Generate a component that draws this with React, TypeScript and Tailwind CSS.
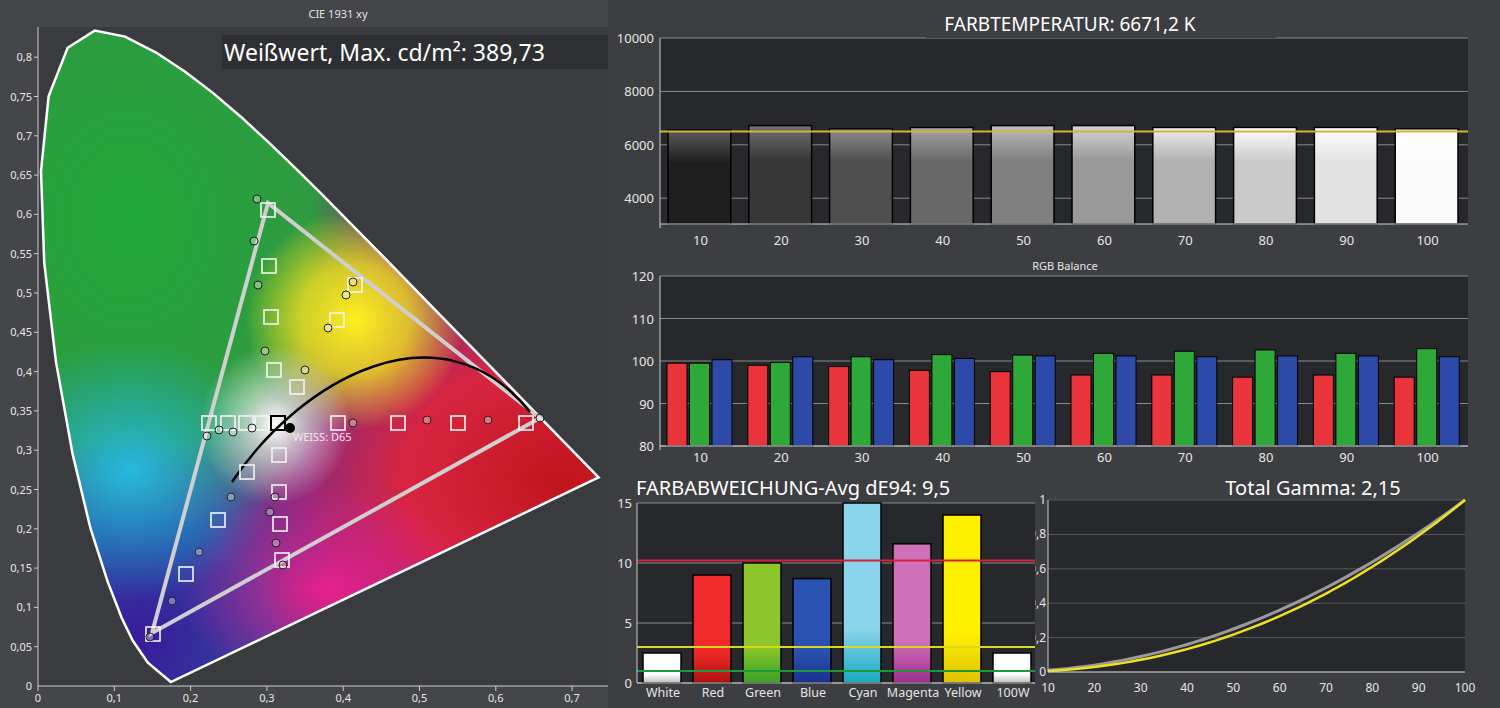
import React from "react";

const FONT = "font-['Open_Sans','Liberation_Sans',sans-serif]";

// CIE chromaticity to pixel in the left panel
const cx = (x: number) => 38 + 763 * x;
const cy = (y: number) => 686 - 786 * y;

const locus: [number, number][] = [
  [0.1741, 0.005], [0.144, 0.0297], [0.1241, 0.0578], [0.1096, 0.0868], [0.0913, 0.1327],
  [0.0687, 0.2007], [0.0454, 0.295], [0.0235, 0.4127], [0.0082, 0.5384], [0.0039, 0.6548],
  [0.0139, 0.7502], [0.0389, 0.812], [0.0743, 0.8338], [0.1142, 0.8262], [0.1547, 0.8059],
  [0.1929, 0.7816], [0.2296, 0.7543], [0.2658, 0.7243], [0.3016, 0.6923], [0.3373, 0.6589],
  [0.3731, 0.6245], [0.4441, 0.5547], [0.5125, 0.4866], [0.5752, 0.4242], [0.627, 0.3725],
  [0.6915, 0.3083], [0.7347, 0.2653],
];

const squares = [
  [268, 210], [269, 266], [271, 317], [274, 370], [297, 387], [337, 320], [355, 285],
  [209, 423], [228, 423], [246, 423], [262, 423], [338, 423], [398, 423], [458, 423],
  [526, 423], [279, 455], [279, 492], [280, 524], [247, 472], [218, 520], [186, 574],
  [282, 560], [153, 634],
];
const dots = [
  [257, 199], [254, 241], [258, 285], [265, 351], [305, 370], [328, 328], [346, 295],
  [353, 282], [207, 436], [219, 430], [233, 432], [252, 428], [353, 423], [427, 420],
  [488, 420], [540, 418], [231, 497], [199, 552], [172, 601], [275, 497], [276, 543],
  [283, 565], [270, 512], [150, 637],
];

function CieChart() {
  const pts = locus.map(([x, y]) => `${cx(x)},${cy(y)}`).join(" ");
  return (
    <svg width="608" height="708" className={FONT}>
      <rect x="38" y="27" width="570" height="659" fill="#3a3b3e" />
      <text x="338" y="18" fill="#e5e5e5" fontSize="11" textAnchor="middle">CIE 1931 xy</text>
      <defs>
        <clipPath id="loc"><polygon points={pts} /></clipPath>
        <radialGradient id="gG" cx="0.5" cy="0.5" r="0.5">
          <stop offset="0" stopColor="#1ea838" /><stop offset="0.7" stopColor="#26a63a" stopOpacity="0.9" /><stop offset="1" stopColor="#26a63a" stopOpacity="0" />
        </radialGradient>
        <radialGradient id="gB" cx="0.5" cy="0.5" r="0.5">
          <stop offset="0" stopColor="#3a1a9a" /><stop offset="0.6" stopColor="#1f46a8" stopOpacity="0.85" /><stop offset="1" stopColor="#1f46a8" stopOpacity="0" />
        </radialGradient>
        <radialGradient id="gR" cx="0.5" cy="0.5" r="0.5">
          <stop offset="0" stopColor="#c0141c" /><stop offset="0.6" stopColor="#e0243a" stopOpacity="0.9" /><stop offset="1" stopColor="#e0243a" stopOpacity="0" />
        </radialGradient>
        <radialGradient id="gY" cx="0.5" cy="0.5" r="0.5">
          <stop offset="0" stopColor="#fff020" /><stop offset="0.5" stopColor="#f0e020" stopOpacity="0.8" /><stop offset="1" stopColor="#f6e21a" stopOpacity="0" />
        </radialGradient>
        <radialGradient id="gC" cx="0.5" cy="0.5" r="0.5">
          <stop offset="0" stopColor="#28b8e0" /><stop offset="1" stopColor="#1ab0d0" stopOpacity="0" />
        </radialGradient>
        <radialGradient id="gM" cx="0.5" cy="0.5" r="0.5">
          <stop offset="0" stopColor="#e8208a" /><stop offset="1" stopColor="#e0208a" stopOpacity="0" />
        </radialGradient>
        <radialGradient id="gW" cx="0.5" cy="0.5" r="0.5">
          <stop offset="0" stopColor="#ffffff" /><stop offset="0.35" stopColor="#ffffff" stopOpacity="0.6" /><stop offset="1" stopColor="#ffffff" stopOpacity="0" />
        </radialGradient>
      </defs>
      <g clipPath="url(#loc)">
        <rect x="0" y="0" width="608" height="708" fill="#8a2a7a" />
        <ellipse cx="130" cy="220" rx="260" ry="330" fill="url(#gG)" />
        <ellipse cx="140" cy="640" rx="220" ry="200" fill="url(#gB)" />
        <ellipse cx="560" cy="480" rx="260" ry="200" fill="url(#gR)" />
        <ellipse cx="130" cy="470" rx="150" ry="130" fill="url(#gC)" />
        <ellipse cx="330" cy="590" rx="150" ry="110" fill="url(#gM)" />
        <ellipse cx="355" cy="320" rx="110" ry="110" fill="url(#gY)" />
        <ellipse cx="275" cy="425" rx="75" ry="80" fill="url(#gW)" />
      </g>
      <polygon points={pts} fill="none" stroke="#ffffff" strokeWidth="2.5" />
      <polygon points="268,203 540,418 152,633" fill="none" stroke="#cfcfcf" strokeWidth="4" />
      <path d="M232 482 C300 380 440 300 530 412" fill="none" stroke="#000" strokeWidth="2.5" />
      {squares.map(([x, y], i) => (
        <rect key={i} x={x - 7} y={y - 7} width="14" height="14" fill="none" stroke="#f4f4f4" strokeWidth="1.6" />
      ))}
      <rect x="271" y="416" width="14" height="14" fill="none" stroke="#000" strokeWidth="2" />
      {dots.map(([x, y], i) => (
        <circle key={i} cx={x} cy={y} r="4" fill="rgba(255,255,255,0.35)" stroke="#222" strokeWidth="1" />
      ))}
      <circle cx="290" cy="428" r="5" fill="#000" />
      <text x="293" y="441" fill="#fbe3ee" fontSize="11">WEISS: D65</text>
      <rect x="222" y="35" width="386" height="34" fill="#2e2f32" />
      <text x="224" y="61" fill="#ffffff" fontSize="23">Weißwert, Max. cd/m²: 389,73</text>
      {[0.05, 0.1, 0.15, 0.2, 0.25, 0.3, 0.35, 0.4, 0.45, 0.5, 0.55, 0.6, 0.65, 0.7, 0.75, 0.8].map((v) => (
        <g key={v}>
          <line x1="34" x2="38" y1={cy(v)} y2={cy(v)} stroke="#ccc" />
          <text x="32" y={cy(v) + 4} fill="#e5e5e5" fontSize="11" textAnchor="end">{String(v).replace(".", ",")}</text>
        </g>
      ))}
      <text x="32" y="690" fill="#e5e5e5" fontSize="11" textAnchor="end">0</text>
      <line x1="38" x2="38" y1="27" y2="686" stroke="#ccc" />
      <line x1="38" x2="608" y1="686" y2="686" stroke="#ccc" />
      {[0, 0.1, 0.2, 0.3, 0.4, 0.5, 0.6, 0.7].map((v) => (
        <g key={v}>
          <line x1={cx(v)} x2={cx(v)} y1="686" y2="691" stroke="#ccc" />
          <text x={cx(v)} y="702" fill="#e5e5e5" fontSize="11" textAnchor="middle">{String(v).replace(".", ",")}</text>
        </g>
      ))}
    </svg>
  );
}

function TempChart() {
  const vals = [6550, 6720, 6600, 6650, 6720, 6720, 6650, 6650, 6650, 6600];
  const y = (v: number) => 38 + (10000 - v) * 0.0267;
  const w = 80.8;
  return (
    <svg width="892" height="258" className={FONT}>
      <rect x="52" y="38" width="808" height="186" fill="#27282b" />
      {[10000, 8000, 6000, 4000].map((v) => (
        <g key={v}>
          <line x1="52" x2="860" y1={y(v)} y2={y(v)} stroke="#8a8a8a" />
          <text x="46" y={y(v) + 5} fill="#e5e5e5" fontSize="13" textAnchor="end">{v}</text>
        </g>
      ))}
      {vals.map((v, i) => {
        const g = Math.round(30 + i * 24.5);
        const c = `rgb(${g},${g},${g})`;
        const c2 = `rgb(${Math.min(255, g + 60)},${Math.min(255, g + 60)},${Math.min(255, g + 62)})`;
        return (
          <g key={i}>
            <defs>
              <linearGradient id={`t${i}`} x1="0" y1="0" x2="0" y2="1">
                <stop offset="0" stopColor={c2} /><stop offset="0.35" stopColor={c} /><stop offset="1" stopColor={c} />
              </linearGradient>
            </defs>
            <rect x={52 + i * w + 8} y={y(v)} width={w - 18} height={224 - y(v)} fill={`url(#t${i})`} stroke="#000" strokeWidth="1.5" />
            <text x={52 + i * w + w / 2} y="245" fill="#e5e5e5" fontSize="13" textAnchor="middle">{(i + 1) * 10}</text>
          </g>
        );
      })}
      <line x1="52" x2="860" y1={y(6500)} y2={y(6500)} stroke="#d9b13a" strokeWidth="2" />
      <line x1="52" x2="52" y1="38" y2="228" stroke="#ccc" />
      <line x1="52" x2="860" y1="224" y2="224" stroke="#ccc" />
      <rect x="318" y="8" width="350" height="30" fill="#3d3e42" />
      <text x="462" y="31" fill="#ffffff" fontSize="19" textAnchor="middle">FARBTEMPERATUR: 6671,2 K</text>
    </svg>
  );
}

function RgbChart() {
  const data = [
    [99.5, 99.5, 100.3], [99, 99.7, 101], [98.7, 101, 100.3], [97.8, 101.5, 100.6], [97.5, 101.4, 101.2],
    [96.7, 101.8, 101.2], [96.7, 102.3, 101], [96.2, 102.6, 101.2], [96.7, 101.8, 101.2], [96.2, 102.9, 101],
  ];
  const y = (v: number) => 18 + (120 - v) * 4.25;
  const w = 80.8;
  const cols = ["#e8343a", "#2fa83a", "#2e4aa8"];
  return (
    <svg width="892" height="212" className={FONT}>
      <text x="457" y="12" fill="#e5e5e5" fontSize="11" textAnchor="middle">RGB Balance</text>
      <rect x="52" y="18" width="808" height="170" fill="#27282b" />
      {[120, 110, 100, 90, 80].map((v) => (
        <g key={v}>
          <line x1="52" x2="860" y1={y(v)} y2={y(v)} stroke="#8a8a8a" />
          <text x="46" y={y(v) + 5} fill="#e5e5e5" fontSize="13" textAnchor="end">{v}</text>
        </g>
      ))}
      {data.map((g, i) => (
        <g key={i}>
          {g.map((v, j) => (
            <rect key={j} x={52 + i * w + 7 + j * 22.5} y={y(v)} width="20" height={188 - y(v)} fill={cols[j]} stroke="#000" strokeWidth="1" />
          ))}
          <text x={52 + i * w + w / 2} y="204" fill="#e5e5e5" fontSize="13" textAnchor="middle">{(i + 1) * 10}</text>
        </g>
      ))}
      <line x1="52" x2="52" y1="18" y2="192" stroke="#ccc" />
      <line x1="52" x2="860" y1="188" y2="188" stroke="#ccc" />
    </svg>
  );
}

function DeltaChart() {
  const bars: [string, number, string, string][] = [
    ["White", 2.5, "#ffffff", "#bbbbbb"], ["Red", 9, "#f02a2a", "#b01010"], ["Green", 10, "#8cc62a", "#3aa028"],
    ["Blue", 8.7, "#2a52b0", "#1a3090"], ["Cyan", 15, "#8ad4ec", "#18a8c0"], ["Magenta", 11.6, "#d070b8", "#a02c90"],
    ["Yellow", 14, "#fff000", "#e0c000"], ["100W", 2.5, "#ffffff", "#bbbbbb"],
  ];
  const y = (v: number) => 33 + (15 - v) * 12;
  const w = 50;
  return (
    <svg width="427" height="238" className={FONT}>
      <rect x="29" y="33" width="400" height="180" fill="#27282b" />
      {[15, 10, 5, 0].map((v) => (
        <g key={v}>
          <line x1="29" x2="429" y1={y(v)} y2={y(v)} stroke="#8a8a8a" />
          <text x="24" y={y(v) + 5} fill="#e5e5e5" fontSize="13" textAnchor="end">{v}</text>
        </g>
      ))}
      {bars.map(([n, v, a, b], i) => (
        <g key={n}>
          <defs>
            <linearGradient id={`d${i}`} x1="0" y1="0" x2="0" y2="1">
              <stop offset="0" stopColor={a} /><stop offset="0.7" stopColor={a} /><stop offset="1" stopColor={b} />
            </linearGradient>
          </defs>
          <rect x={30 + i * w + 5} y={y(v)} width="38" height={213 - y(v)} fill={`url(#d${i})`} stroke="#000" strokeWidth="1.5" />
          <text x={30 + i * w + w / 2} y="227" fill="#e5e5e5" fontSize="12.5" textAnchor="middle">{n}</text>
        </g>
      ))}
      <line x1="29" x2="429" y1={y(10.2)} y2={y(10.2)} stroke="#d8203a" strokeWidth="2" />
      <line x1="29" x2="429" y1={y(3)} y2={y(3)} stroke="#d8d820" strokeWidth="2" />
      <line x1="29" x2="429" y1={y(1)} y2={y(1)} stroke="#1a9a3a" strokeWidth="2" />
      <line x1="29" x2="29" y1="33" y2="213" stroke="#ccc" />
      <line x1="29" x2="429" y1="213" y2="213" stroke="#ccc" />
      <text x="28" y="25" fill="#ffffff" fontSize="20">FARBABWEICHUNG-Avg dE94: 9,5</text>
    </svg>
  );
}

function GammaChart() {
  const px = (x: number) => 13 + ((x - 10) / 90) * 417;
  const py = (v: number) => 202 - v * 172;
  const curve = (g: number) => {
    const p: string[] = [];
    for (let x = 10; x <= 100; x += 2) p.push(`${px(x)},${py(Math.pow(x / 100, g))}`);
    return p.join(" ");
  };
  return (
    <svg width="465" height="238" className={FONT}>
      <rect x="13" y="30" width="417" height="172" fill="#27282b" />
      {[1, 0.8, 0.6, 0.4, 0.2, 0].map((v) => (
        <g key={v}>
          <line x1="13" x2="430" y1={py(v)} y2={py(v)} stroke="#5a5a5a" />
          <text x="11" y={py(v) + 4} fill="#e5e5e5" fontSize="12" textAnchor="end">{String(v).replace(".", ",")}</text>
        </g>
      ))}
      {[10, 20, 30, 40, 50, 60, 70, 80, 90, 100].map((v) => (
        <text key={v} x={px(v)} y="222" fill="#e5e5e5" fontSize="12" textAnchor="middle">{v}</text>
      ))}
      <polyline points={curve(2.0)} fill="none" stroke="#9a9a9a" strokeWidth="3" />
      <polyline points={curve(2.2)} fill="none" stroke="#f0e020" strokeWidth="2.5" />
      <line x1="13" x2="13" y1="30" y2="202" stroke="#ccc" />
      <line x1="13" x2="430" y1="202" y2="202" stroke="#ccc" />
      <text x="278" y="25" fill="#ffffff" fontSize="20" textAnchor="middle">Total Gamma: 2,15</text>
    </svg>
  );
}

export default function App() {
  return (
    <div className="flex w-[1500px] h-[708px] overflow-hidden bg-[#3d3e42]">
      <div className="w-[608px] h-[708px] bg-[#45464a]">
        <CieChart />
      </div>
      <div className="flex flex-col w-[892px]">
        <div className="h-[258px]"><TempChart /></div>
        <div className="h-[212px]"><RgbChart /></div>
        <div className="flex h-[238px]">
          <DeltaChart />
          <GammaChart />
        </div>
      </div>
    </div>
  );
}
